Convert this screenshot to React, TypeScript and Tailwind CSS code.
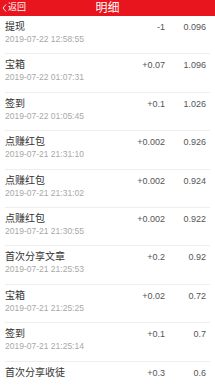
const rows = [
  { title: "提现", date: "2019-07-22 12:58:55", amount: "-1", balance: "0.096" },
  { title: "宝箱", date: "2019-07-22 01:07:31", amount: "+0.07", balance: "1.096" },
  { title: "签到", date: "2019-07-22 01:05:45", amount: "+0.1", balance: "1.026" },
  { title: "点赚红包", date: "2019-07-21 21:31:10", amount: "+0.002", balance: "0.926" },
  { title: "点赚红包", date: "2019-07-21 21:31:02", amount: "+0.002", balance: "0.924" },
  { title: "点赚红包", date: "2019-07-21 21:30:55", amount: "+0.002", balance: "0.922" },
  { title: "首次分享文章", date: "2019-07-21 21:25:53", amount: "+0.2", balance: "0.92" },
  { title: "宝箱", date: "2019-07-21 21:25:25", amount: "+0.02", balance: "0.72" },
  { title: "签到", date: "2019-07-21 21:25:14", amount: "+0.1", balance: "0.7" },
  { title: "首次分享收徒", date: "", amount: "+0.3", balance: "0.6" },
];

export default function App() {
  return (
    <div
      className="w-[215px] h-[391px] overflow-hidden bg-white"
      style={{ fontFamily: '"Liberation Sans", "Noto Sans CJK SC", sans-serif' }}
    >
      <div className="h-[16px] bg-[#e8141e] flex items-center relative">
        <div className="absolute left-[2px] top-0 h-[16px] flex items-center text-white text-[9px]">
          <svg width="5" height="8" viewBox="0 0 5 8" className="mr-[1px]">
            <path d="M4 0.5 L1 4 L4 7.5" stroke="white" strokeWidth="0.9" fill="none" />
          </svg>
          <span>返回</span>
        </div>
        <div className="flex-1 text-center text-white text-[12px] leading-none">明细</div>
      </div>
      <div>
        {rows.map((r, i) => (
          <div key={i} className="mx-[5px] h-[38.4px] border-b border-[#eeeeee] flex items-start pt-[5px]">
            <div className="flex-1 flex flex-col">
              <span className="text-[10px] leading-[12px] text-[#333333]">{r.title}</span>
              {r.date && (
                <span className="text-[8.5px] leading-[12px] text-[#a8a8a8]">{r.date}</span>
              )}
            </div>
            <span className="w-[40px] text-right text-[9px] leading-[12px] text-[#555555]">{r.amount}</span>
            <span className="w-[41px] mr-[4px] text-right text-[9px] leading-[12px] text-[#555555]">{r.balance}</span>
          </div>
        ))}
      </div>
    </div>
  );
}
